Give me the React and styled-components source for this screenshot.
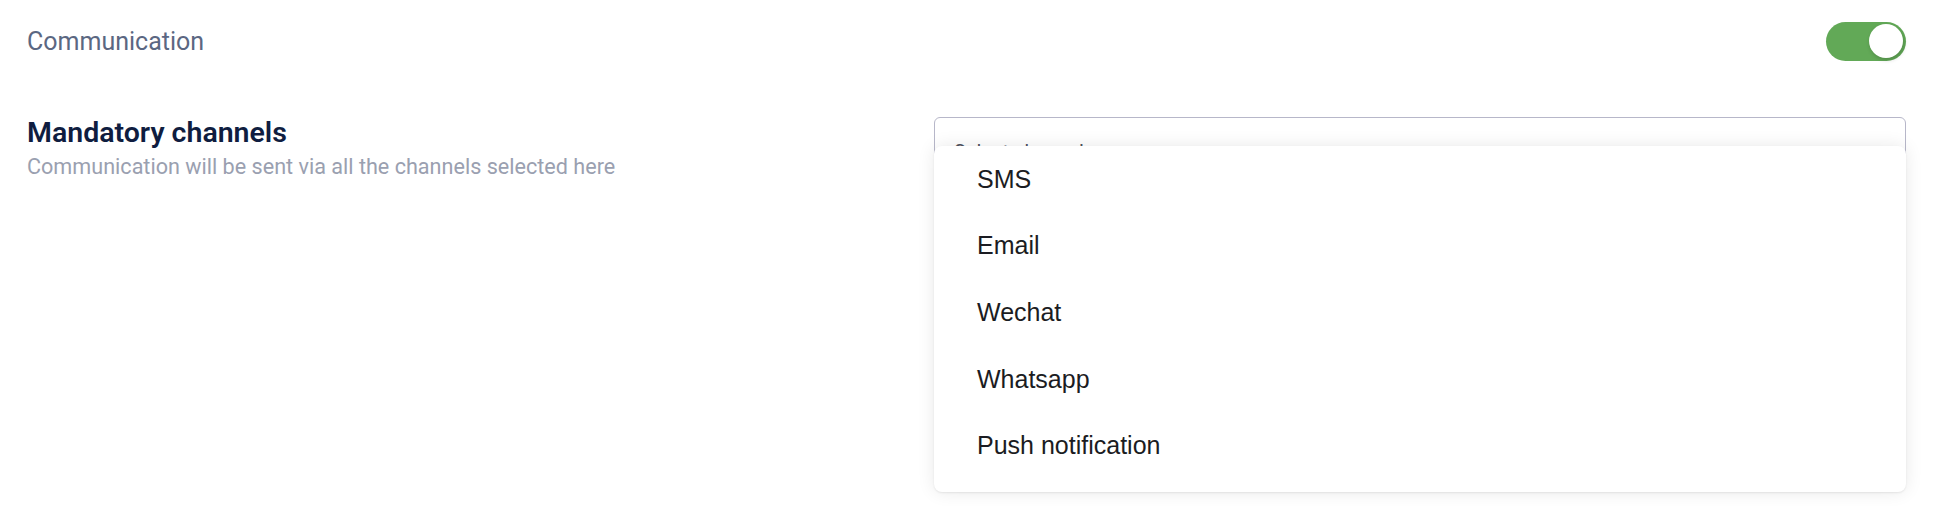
import React from 'react';
import styled, { createGlobalStyle } from 'styled-components';

const GlobalStyle = createGlobalStyle`
  body {
    margin: 0;
    background: #ffffff;
    font-family: Roboto, 'Noto Sans', sans-serif;
  }
`;

const Page = styled.div`
  box-sizing: border-box;
  min-height: 506px;
  padding: 22px 48px 0 27px;
`;

const ToggleRow = styled.div`
  display: flex;
  align-items: center;
  justify-content: space-between;
  height: 39px;
`;

const SectionLabel = styled.span`
  font-size: 25px;
  color: #5b6782;
`;

const Track = styled.button`
  position: relative;
  width: 80px;
  height: 39px;
  padding: 0;
  border: none;
  border-radius: 20px;
  background: ${({ $on }) => ($on ? '#62a957' : '#c9ccd4')};
  cursor: pointer;
`;

const Knob = styled.span`
  position: absolute;
  top: 2px;
  ${({ $on }) => ($on ? 'right: 3px;' : 'left: 3px;')}
  width: 34px;
  height: 34px;
  border-radius: 50%;
  background: #ffffff;
  box-shadow: 1px 2px 4px rgba(0, 0, 0, 0.18);
`;

const FieldRow = styled.div`
  display: grid;
  grid-template-columns: 1fr 972px;
  margin-top: 56px;
`;

const FieldInfo = styled.div`
  display: flex;
  flex-direction: column;
  padding-top: 1px;
`;

const FieldTitle = styled.h3`
  margin: 0;
  font-size: 28.5px;
  line-height: 30px;
  font-weight: 600;
  color: #0f1d40;
`;

const FieldHint = styled.p`
  margin: 6px 0 0;
  font-size: 21.6px;
  line-height: 26px;
  color: #9aa0b0;
`;

const SelectWrap = styled.div`
  position: relative;
`;

const SelectBox = styled.div`
  box-sizing: border-box;
  height: 70px;
  padding: 0 19px;
  display: flex;
  align-items: center;
  border: 1px solid #b7b7c9;
  border-radius: 6px;
  font-size: 20px;
  color: #4f535e;
`;

const Menu = styled.ul`
  position: absolute;
  top: 29px;
  left: 0;
  right: 0;
  margin: 0;
  padding: 0 0 13px;
  list-style: none;
  background: #ffffff;
  border-radius: 8px;
  box-shadow: 0 0 18px rgba(0, 0, 0, 0.09), 0 1px 2px rgba(0, 0, 0, 0.08);
`;

const MenuItem = styled.li`
  height: 66.6px;
  display: flex;
  align-items: center;
  padding: 0 43px;
  font-family: 'Liberation Sans', Arial, sans-serif;
  font-size: 25px;
  color: #1b1c22;
  cursor: pointer;
`;

const channels = ['SMS', 'Email', 'Wechat', 'Whatsapp', 'Push notification'];

const App = () => (
  <>
    <GlobalStyle />
    <Page>
      <ToggleRow>
        <SectionLabel>Communication</SectionLabel>
        <Track $on>
          <Knob $on />
        </Track>
      </ToggleRow>
      <FieldRow>
        <FieldInfo>
          <FieldTitle>Mandatory channels</FieldTitle>
          <FieldHint>Communication will be sent via all the channels selected here</FieldHint>
        </FieldInfo>
        <SelectWrap>
          <SelectBox>Select channels</SelectBox>
          <Menu>
            {channels.map((c) => (
              <MenuItem key={c}>{c}</MenuItem>
            ))}
          </Menu>
        </SelectWrap>
      </FieldRow>
    </Page>
  </>
);

export default App;
